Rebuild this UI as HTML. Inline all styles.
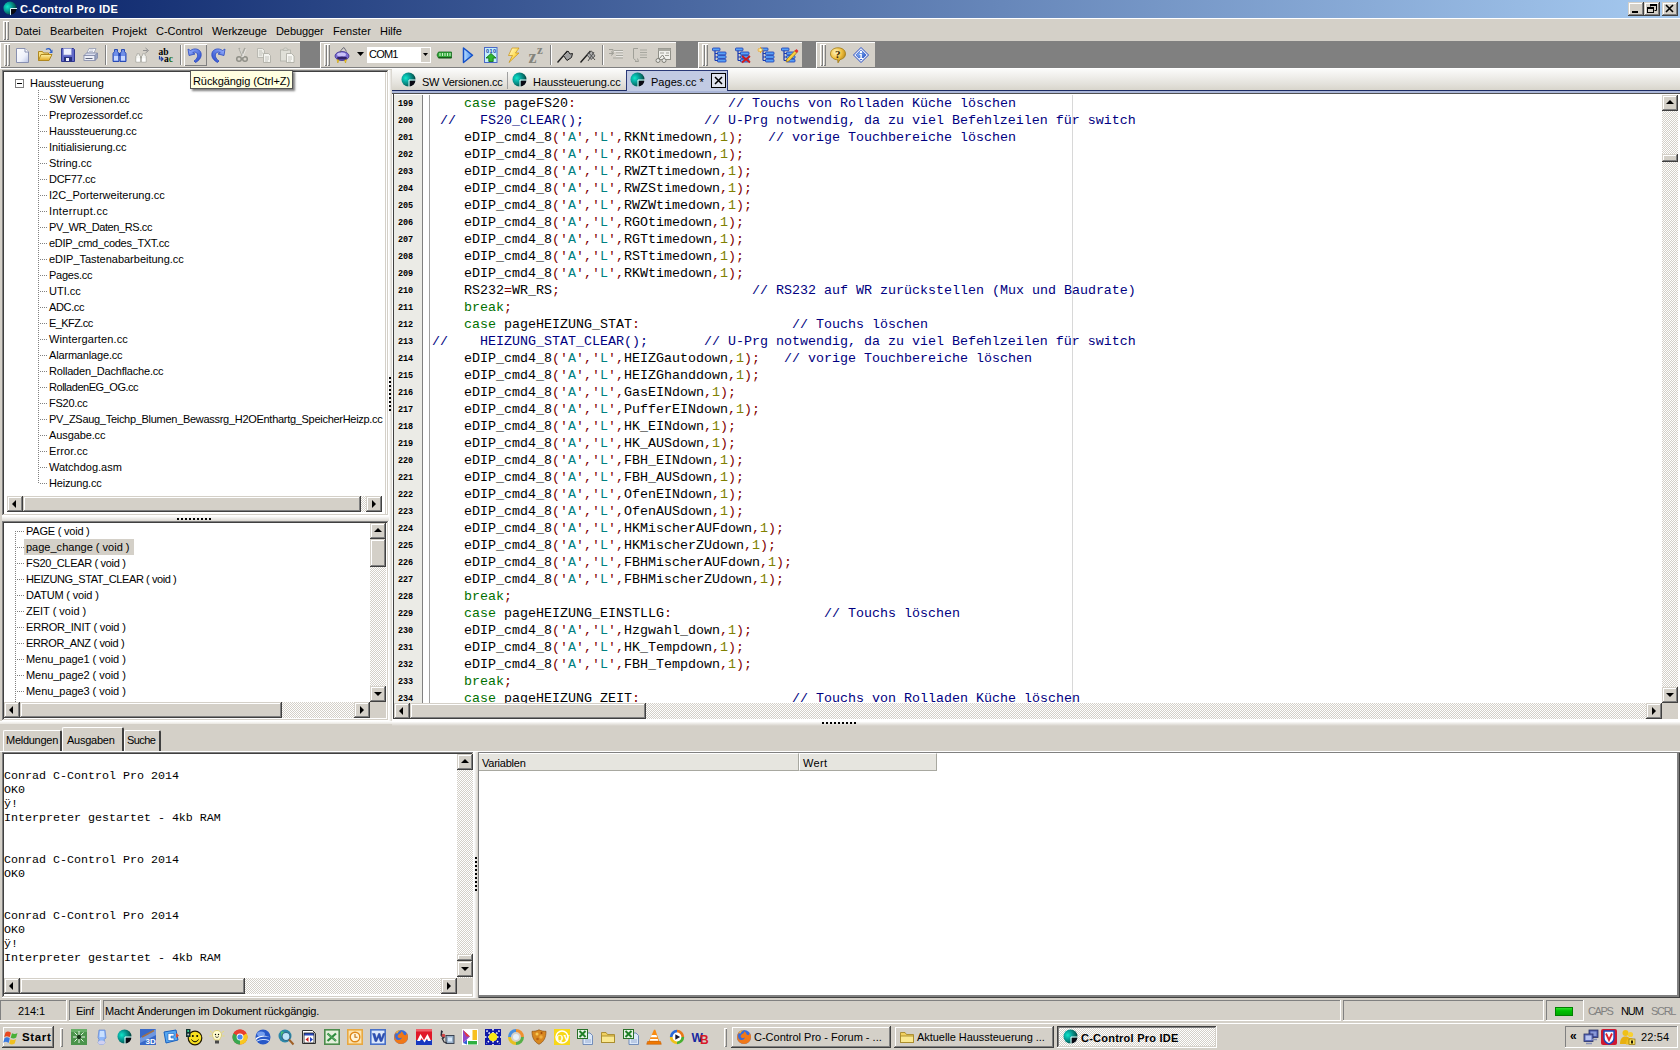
<!DOCTYPE html>
<html lang="de"><head><meta charset="utf-8"><title>C-Control Pro IDE</title>
<style>
*{box-sizing:border-box;margin:0;padding:0}
html,body{width:1680px;height:1050px;overflow:hidden;background:#d4d0c8}
body{position:relative;font-family:"Liberation Sans",sans-serif;font-size:11px;color:#000;line-height:13px}
.a{position:absolute}
.t{position:absolute;white-space:pre;line-height:13px;height:13px}
.raised{background:#d4d0c8;box-shadow:inset -1px -1px #404040,inset 1px 1px #d4d0c8,inset -2px -2px #808080,inset 2px 2px #fff}
.sunken{box-shadow:inset -1px -1px #fff,inset 1px 1px #808080,inset -2px -2px #d4d0c8,inset 2px 2px #404040}
.sunk1{box-shadow:inset -1px -1px #fff,inset 1px 1px #808080}
.track{background:repeating-conic-gradient(#fff 0% 25%,#d4d0c8 0% 50%) 0 0/2px 2px}
.grip{position:absolute;width:3px;box-shadow:inset 1px 1px #fff,inset -1px -1px #808080}
.tb{position:absolute;top:42px;height:26px;background:#d4d0c8}
.sep{position:absolute;top:45px;width:2px;height:20px;border-left:1px solid #808080;border-right:1px solid #fff}
.ic{position:absolute;width:16px;height:16px;overflow:visible}
.mono{font-family:"Liberation Mono",monospace}
.code{position:absolute;left:432px;white-space:pre;font-family:"Liberation Mono",monospace;font-size:13.333px;line-height:17px;height:17px;color:#000}
.ln{position:absolute;left:398px;white-space:pre;font-family:"Liberation Mono",monospace;font-weight:bold;font-size:8.5px;line-height:17px;height:17px;color:#000;letter-spacing:-0.1px}
.k{color:#007000}.c{color:#000080}.s{color:#008080}.n{color:#808000}.o{color:#800000}
.out{position:absolute;left:4px;white-space:pre;font-family:"Liberation Mono",monospace;font-size:11.667px;line-height:14px;height:14px}
.tree{position:absolute;white-space:pre;line-height:16px;height:16px}
.dotv{position:absolute;width:1px;background:repeating-linear-gradient(to bottom,#808080 0 1px,transparent 1px 2px)}
.doth{position:absolute;height:1px;background:repeating-linear-gradient(to right,#808080 0 1px,transparent 1px 2px)}
</style></head>
<body>
<div class="a" style="left:0px;top:0px;width:1680px;height:18px;background:linear-gradient(to right,#0a246a,#a6caf0)"></div>
<div class="a" style="left:0px;top:18px;width:1680px;height:1px;background:#fff"></div>
<div class="t" style="left:20px;top:3px;color:#fff;font-weight:bold;letter-spacing:0.269px;">C-Control Pro IDE</div>
<div class="a raised" style="left:1628px;top:2px;width:16px;height:14px;"><svg width="16" height="14" viewBox="0 0 16 14" style="position:absolute;left:0;top:0"><rect x="4" y="9" width="6" height="2" fill="#000"/></svg></div>
<div class="a raised" style="left:1644px;top:2px;width:16px;height:14px;"><svg width="16" height="14" viewBox="0 0 16 14" style="position:absolute;left:0;top:0"><path d="M6.500 4.500V2.500H12.500V8.500H10.500" fill="none" stroke="#000" stroke-width="1"/><rect x="6" y="2" width="7" height="2" fill="#000"/><rect x="3.500" y="5.500" width="6" height="5" fill="none" stroke="#000"/><rect x="3" y="5" width="7" height="2" fill="#000"/></svg></div>
<div class="a raised" style="left:1662px;top:2px;width:16px;height:14px;"><svg width="16" height="14" viewBox="0 0 16 14" style="position:absolute;left:0;top:0"><path d="M4 3l7 7M11 3l-7 7" stroke="#000" stroke-width="1.6" fill="none"/></svg></div>
<div class="a" style="left:0px;top:19px;width:1680px;height:22px;background:#d4d0c8"></div>
<div class="grip" style="left:3px;top:21px;height:19px"></div><div class="grip" style="left:6px;top:21px;height:19px"></div>
<div class="t" style="left:15px;top:25px;letter-spacing:0.028px;">Datei</div>
<div class="t" style="left:50px;top:25px;letter-spacing:0.065px;">Bearbeiten</div>
<div class="t" style="left:112px;top:25px;letter-spacing:0.092px;">Projekt</div>
<div class="t" style="left:156px;top:25px;letter-spacing:-0.035px;">C-Control</div>
<div class="t" style="left:212px;top:25px;letter-spacing:-0.08px;">Werkzeuge</div>
<div class="t" style="left:276px;top:25px;letter-spacing:-0.075px;">Debugger</div>
<div class="t" style="left:333px;top:25px;letter-spacing:0.084px;">Fenster</div>
<div class="t" style="left:380px;top:25px;letter-spacing:-0.054px;">Hilfe</div>
<div class="a" style="left:0px;top:41px;width:1680px;height:27px;background:#808080"></div>
<div class="a" style="left:0px;top:42px;width:300px;height:26px;background:#d4d0c8;box-shadow:inset 0 1px #fff,inset 1px 0 #fff,inset 0 -1px #808080"></div>
<div class="grip" style="left:4px;top:44px;height:22px"></div><div class="grip" style="left:7px;top:44px;height:22px"></div>
<div class="a" style="left:320px;top:42px;width:356px;height:26px;background:#d4d0c8;box-shadow:inset 0 1px #fff,inset 1px 0 #fff,inset 0 -1px #808080"></div>
<div class="grip" style="left:324px;top:44px;height:22px"></div><div class="grip" style="left:327px;top:44px;height:22px"></div>
<div class="a" style="left:698px;top:42px;width:104px;height:26px;background:#d4d0c8;box-shadow:inset 0 1px #fff,inset 1px 0 #fff,inset 0 -1px #808080"></div>
<div class="grip" style="left:702px;top:44px;height:22px"></div><div class="grip" style="left:705px;top:44px;height:22px"></div>
<div class="a" style="left:816px;top:42px;width:59px;height:26px;background:#d4d0c8;box-shadow:inset 0 1px #fff,inset 1px 0 #fff,inset 0 -1px #808080"></div>
<div class="grip" style="left:820px;top:44px;height:22px"></div><div class="grip" style="left:823px;top:44px;height:22px"></div>
<svg width="0" height="0" style="position:absolute"><defs>
<radialGradient id="gs" cx="0.3" cy="0.4" r="0.75"><stop offset="0" stop-color="#10e8c8"/><stop offset="0.35" stop-color="#08a8a0"/><stop offset="0.75" stop-color="#056860"/><stop offset="1" stop-color="#012828"/></radialGradient>
<linearGradient id="gdoc" x1="0" y1="0" x2="1" y2="1"><stop offset="0" stop-color="#fff"/><stop offset="0.6" stop-color="#eef1fa"/><stop offset="1" stop-color="#b9c3e6"/></linearGradient>
<linearGradient id="gfold" x1="0" y1="0" x2="0" y2="1"><stop offset="0" stop-color="#fff3a8"/><stop offset="1" stop-color="#e2a820"/></linearGradient>
<linearGradient id="gblue" x1="0" y1="0" x2="1" y2="1"><stop offset="0" stop-color="#9ab4ff"/><stop offset="1" stop-color="#2244c8"/></linearGradient>
<linearGradient id="gplay" x1="0" y1="0" x2="1" y2="0"><stop offset="0" stop-color="#bfe0ff"/><stop offset="1" stop-color="#3d8cf0"/></linearGradient>
<radialGradient id="gq" cx="0.35" cy="0.3" r="0.8"><stop offset="0" stop-color="#fff6c0"/><stop offset="0.5" stop-color="#f0c040"/><stop offset="1" stop-color="#a87810"/></radialGradient>
<linearGradient id="ginf" x1="0" y1="0" x2="1" y2="1"><stop offset="0" stop-color="#a0c8ff"/><stop offset="1" stop-color="#1848c0"/></linearGradient>
<linearGradient id="gbolt" x1="0" y1="0" x2="1" y2="1"><stop offset="0" stop-color="#fffbe0"/><stop offset="0.5" stop-color="#ffe060"/><stop offset="1" stop-color="#e8a000"/></linearGradient>
</defs></svg>
<div class="sep" style="left:105px"></div>
<div class="sep" style="left:180px"></div>
<div class="sep" style="left:550px"></div>
<div class="sep" style="left:602px"></div>
<div class="a" style="left:184px;top:44px;width:23px;height:22px;box-shadow:inset 1px 1px #fff,inset -1px -1px #808080"></div>
<svg class="ic" style="left:14px;top:47px;width:16px;height:16px" viewBox="0 0 16 16"><path d="M2.500 1.500h8.500l3.500 3.500v10.500h-12z" fill="url(#gdoc)" stroke="#8890b0" stroke-width="1"/><path d="M11 1.500v3.500h3.500" fill="#fff" stroke="#8890b0"/></svg>
<svg class="ic" style="left:37px;top:47px;width:16px;height:16px" viewBox="0 0 16 16"><path d="M1.500 13.500v-9h4l1 1.500h5v2" fill="#f8e080" stroke="#b08820"/><path d="M1.500 13.500l2.500-6h11l-3 6z" fill="url(#gfold)" stroke="#b08820"/><path d="M9 2.500c2-1.500 4.500-1 5 1.500" fill="none" stroke="#3060c8" stroke-width="1.400"/><path d="M15.500 2.500v3.500h-3.500z" fill="#3060c8"/></svg>
<svg class="ic" style="left:60px;top:47px;width:16px;height:16px" viewBox="0 0 16 16"><path d="M1.500 1.500h12l1 1v12h-13z" fill="#6068c8" stroke="#303890"/><rect x="3.500" y="1.500" width="8" height="6.500" fill="#eef0ff" stroke="#9098d0" stroke-width=".6"/><rect x="4" y="10" width="8" height="4.500" fill="#28307c"/><rect x="6" y="11" width="3" height="3" fill="#f0f0ff"/></svg>
<svg class="ic" style="left:83px;top:47px;width:16px;height:16px" viewBox="0 0 16 16"><path d="M4 6l2-4.500h7l-2 4.500z" fill="#fff" stroke="#9098b0" stroke-width=".8"/><path d="M1 8.500l2.500-2.500h11l-2.500 2.500z" fill="#d8dcec" stroke="#8088a8" stroke-width=".8"/><rect x="1" y="8.500" width="11" height="5" fill="#eef0f8" stroke="#8088a8" stroke-width=".8"/><path d="M12 8.500l2.500-2.500v5l-2.500 2.500z" fill="#98a4c0" stroke="#8088a8" stroke-width=".8"/><rect x="2.500" y="11" width="7" height="1" fill="#606880"/><path d="M6.500 3h4M6 4.500h4" stroke="#a0a8c0" stroke-width=".7"/></svg>
<svg class="ic" style="left:112px;top:47px;width:16px;height:16px" viewBox="0 0 16 16"><path d="M2.500 2.500h3v2l1.500 2v8h-6v-8l1.500-2z" fill="#6f8fe8" stroke="#1c3fb0" stroke-width=".9"/><path d="M9.500 2.500h3v2l1.500 2v8h-6v-8l1.500-2z" fill="#6f8fe8" stroke="#1c3fb0" stroke-width=".9"/><rect x="6.500" y="6" width="2" height="3" fill="#1c3fb0"/><rect x="2" y="9" width="4" height="4.500" fill="#c8d8ff"/><rect x="9" y="9" width="4" height="4.500" fill="#c8d8ff"/></svg>
<svg class="ic" style="left:135px;top:47px;width:16px;height:16px" viewBox="0 0 16 16"><g transform="translate(0,5) scale(.8,.7)"><path d="M2.500 2.500h3v2l1.500 2v8h-6v-8l1.500-2z" fill="#f4f4f0" stroke="#a0a098" stroke-width=".9"/><path d="M9.500 2.500h3v2l1.500 2v8h-6v-8l1.500-2z" fill="#f4f4f0" stroke="#a0a098" stroke-width=".9"/><rect x="6.500" y="6" width="2" height="3" fill="#a0a098"/><rect x="2" y="9" width="4" height="4.500" fill="#ffffff"/><rect x="9" y="9" width="4" height="4.500" fill="#ffffff"/></g><path d="M8 3.500h4.500M10.500 1l3 2.500l-3 2.500" fill="none" stroke="#909090" stroke-width="1"/></svg>
<svg class="ic" style="left:158px;top:47px;width:16px;height:16px" viewBox="0 0 16 16"><text x="0.500" y="7.500" font-family="Liberation Serif,serif" font-size="9.500" font-weight="bold" fill="#000">ab</text><text x="6" y="15" font-family="Liberation Serif,serif" font-size="9.500" font-weight="bold" fill="#000">a<tspan fill="#207020">c</tspan></text><path d="M1.500 9v3h3M3 10l2 2l-2 2" fill="none" stroke="#2040a0" stroke-width="1.200"/></svg>
<svg class="ic" style="left:187px;top:47px;width:16px;height:16px" viewBox="0 0 16 16"><path d="M1 2l1 6.500l6-1.500l-2.200-1.300c2.500-1.500 5.500 0.300 4.700 3.800c-.5 2-2 3.500-3.500 4.500l1.500 1.500c3.500-2 6.500-5 5.500-9.500c-1-4-6.500-5.500-10.500-2.500z" fill="url(#gblue)" stroke="#2848c0" stroke-width=".8"/></svg>
<svg class="ic" style="left:210px;top:47px;width:16px;height:16px" viewBox="0 0 16 16"><g transform="translate(16,0) scale(-1,1)"><path d="M1 2l1 6.500l6-1.500l-2.200-1.300c2.500-1.500 5.500 0.300 4.700 3.800c-.5 2-2 3.500-3.500 4.500l1.500 1.500c3.500-2 6.500-5 5.500-9.500c-1-4-6.500-5.500-10.500-2.500z" fill="url(#gblue)" stroke="#2848c0" stroke-width=".8"/></g></svg>
<svg class="ic" style="left:234px;top:47px;width:16px;height:16px" viewBox="0 0 16 16"><path d="M5 1l3.500 8M11 1l-3.500 8" stroke="#a8a8a0" stroke-width="1.600" fill="none"/><circle cx="5" cy="12" r="2.300" fill="none" stroke="#909088" stroke-width="1.500"/><circle cx="11" cy="12" r="2.300" fill="none" stroke="#909088" stroke-width="1.500"/><path d="M5 1l3.500 8M11 1l-3.500 8" stroke="#fff" stroke-width=".5" fill="none" transform="translate(1,1)"/></svg>
<svg class="ic" style="left:256px;top:47px;width:16px;height:16px" viewBox="0 0 16 16"><path d="M1.500 1.500h5l2 2v7h-7z" fill="#ecece6" stroke="#b0b0a8" stroke-width=".8"/><path d="M7.500 6.500h5l2 2v7h-7z" fill="#f4f4f0" stroke="#a8a8a0" stroke-width=".8"/><path d="M3 4h3M3 6h4M3 8h3M9 10h4M9 12h4M9 14h3" stroke="#b8b8b0" stroke-width=".8"/></svg>
<svg class="ic" style="left:279px;top:47px;width:16px;height:16px" viewBox="0 0 16 16"><rect x="1.500" y="3" width="10" height="11" fill="#e0e0d8" stroke="#b0b0a8" stroke-width=".8"/><path d="M4 3c0-2.500 5-2.500 5 0z" fill="#f0f0ec" stroke="#a8a8a0" stroke-width=".8"/><path d="M7.500 6.500h5l2.500 2.500v6.500h-7.500z" fill="#f8f8f4" stroke="#a8a8a0" stroke-width=".8"/><path d="M9 10h4M9 12h4M9 14h3" stroke="#b8b8b0" stroke-width=".8"/></svg>
<svg class="ic" style="left:334px;top:47px;width:16px;height:16px" viewBox="0 0 16 16"><ellipse cx="8" cy="9" rx="7" ry="4.500" fill="#7a6cd0" stroke="#3a2c90" stroke-width=".8"/><ellipse cx="7.500" cy="7.500" rx="4.500" ry="2" fill="#c8c0f8"/><path d="M6 5.500c1-3 3-4.500 4-5M10 .5l2.500 4" stroke="#606070" stroke-width=".9" fill="none"/><path d="M3 12.500l.8 3.500l1.200-3zM10.500 13l1 3l1-3.500z" fill="#ffe020" stroke="#c09000" stroke-width=".5"/><ellipse cx="8" cy="11" rx="5" ry="1.500" fill="#30206c"/></svg>
<svg class="ic" style="left:436px;top:47px;width:16px;height:16px" viewBox="0 0 16 16"><path d="M1 8l1.500-3h13v6h-13z" fill="#30a838" stroke="#186820" stroke-width=".8"/><path d="M4 6v3M6.500 6v3M9 6v3M11.500 6v3M14 6v3" stroke="#c8f0c8" stroke-width="1.100"/><rect x="2.500" y="10" width="13" height="1.200" fill="#185818"/></svg>
<svg class="ic" style="left:460px;top:47px;width:16px;height:16px" viewBox="0 0 16 16"><path d="M3.500 1v14.500l9-7.250z" fill="url(#gplay)" stroke="#1450c8" stroke-width="1.500" stroke-linejoin="round"/></svg>
<svg class="ic" style="left:483px;top:47px;width:16px;height:16px" viewBox="0 0 16 16"><rect x="1.500" y=".5" width="12.500" height="15" fill="#c4f0fc" stroke="#4a68c8" stroke-width="1"/><text x="3" y="5.800" font-family="Liberation Sans,sans-serif" font-size="5.500" font-weight="bold" fill="#1838a0" textLength="10">010</text><path d="M8 6.500l5 4.500h-2.800v3.500h-4.400v-3.500h-2.800z" fill="#30b830" stroke="#106810" stroke-width=".8"/></svg>
<svg class="ic" style="left:506px;top:47px;width:16px;height:16px" viewBox="0 0 16 16"><path d="M6 1h7l-3.500 5h3.500l-10 9.500l3.500-7h-4z" fill="url(#gbolt)" stroke="#c89010" stroke-width=".7"/></svg>
<svg class="ic" style="left:529px;top:47px;width:16px;height:16px" viewBox="0 0 16 16"><text x="-.5" y="15.500" font-family="Liberation Serif,serif" font-size="18" font-weight="bold" fill="#84847c">z</text><text x="8" y="6.500" font-family="Liberation Serif,serif" font-size="13" font-weight="bold" fill="#84847c">z</text></svg>
<svg class="ic" style="left:557px;top:47px;width:16px;height:16px" viewBox="0 0 16 16"><path d="M.5 15.500l10-11.500" stroke="#202020" stroke-width="1.400"/><path d="M6.500 8.500l4.500-4.500l2 3l2.500-.5l-1 4l-4.500 3z" fill="#a0a0a0" stroke="#202020" stroke-width="1"/></svg>
<svg class="ic" style="left:580px;top:47px;width:16px;height:16px" viewBox="0 0 16 16"><path d="M.5 15.500l10-11.500" stroke="#202020" stroke-width="1.400"/><path d="M7 8l4.500-4l3.500 5l-4 3.500z" fill="#b0b0b0" stroke="#404040" stroke-width=".8"/><path d="M8 5l7 8M14 5l-6 9" stroke="#505050" stroke-width="1"/></svg>
<svg class="ic" style="left:608px;top:47px;width:16px;height:16px" viewBox="0 0 16 16"><path d="M6 3.500h9M8 6h7M8 8.500h7M5 11h10" stroke="#a8a8a0" stroke-width="1"/><path d="M1 2.500h4v4M3 4.500l2.500 2l-2.500 2M1 6.500h4" fill="none" stroke="#a0a098" stroke-width="1"/><path d="M6 4.500h9M8 7h7M8 9.500h7" stroke="#fff" stroke-width=".5"/></svg>
<svg class="ic" style="left:632px;top:47px;width:16px;height:16px" viewBox="0 0 16 16"><path d="M8 3h7M8 5.500h7M8 8h7M8 10.500h7" stroke="#a8a8a0" stroke-width="1"/><path d="M6 1.500h-4.500v10l3 2.500M5.500 11.500l1 3l-3.500 0" fill="none" stroke="#a0a098" stroke-width="1"/></svg>
<svg class="ic" style="left:655px;top:47px;width:16px;height:16px" viewBox="0 0 16 16"><rect x="3.500" y="1.500" width="12" height="11" fill="#f0f0ec" stroke="#909088" stroke-width="1"/><rect x="3.500" y="1.500" width="12" height="2.500" fill="#a8a8a0"/><path d="M5 6h4M11 6h3M10 8.500h4" stroke="#a0a098"/><path d="M4 12l3.500-4l2 3" fill="none" stroke="#808078"/><circle cx="3" cy="13.500" r="2" fill="#e8e8e4" stroke="#808078"/><circle cx="9" cy="13.500" r="2" fill="#e8e8e4" stroke="#808078"/></svg>
<svg class="ic" style="left:712px;top:47px;width:16px;height:16px" viewBox="0 0 16 16"><path d="M3 3v10.500M3 6.500h3M3 10h3M3 13.500h3" stroke="#1838b0" stroke-width="1.200" fill="none"/><rect x=".5" y="1" width="7.500" height="2.800" rx=".8" fill="#58a0f8" stroke="#1838b0" stroke-width=".8"/><rect x="5.500" y="5" width="8.500" height="2.800" rx=".8" fill="#58a0f8" stroke="#1838b0" stroke-width=".8"/><rect x="5.500" y="8.600" width="8.500" height="2.800" rx=".8" fill="#58a0f8" stroke="#1838b0" stroke-width=".8"/><rect x="5.500" y="12.200" width="8.500" height="2.800" rx=".8" fill="#58a0f8" stroke="#1838b0" stroke-width=".8"/></svg>
<svg class="ic" style="left:735px;top:47px;width:16px;height:16px" viewBox="0 0 16 16"><path d="M3 3v10.500M3 6.500h3M3 10h3M3 13.500h3" stroke="#1838b0" stroke-width="1.200" fill="none"/><rect x=".5" y="1" width="7.500" height="2.800" rx=".8" fill="#58a0f8" stroke="#1838b0" stroke-width=".8"/><rect x="5.500" y="5" width="8.500" height="2.800" rx=".8" fill="#58a0f8" stroke="#1838b0" stroke-width=".8"/><rect x="5.500" y="8.600" width="8.500" height="2.800" rx=".8" fill="#58a0f8" stroke="#1838b0" stroke-width=".8"/><rect x="5.500" y="12.200" width="8.500" height="2.800" rx=".8" fill="#58a0f8" stroke="#1838b0" stroke-width=".8"/><path d="M7 9l8 6.500M15 9l-8 6.500" stroke="#d01818" stroke-width="1.800"/></svg>
<svg class="ic" style="left:758px;top:47px;width:16px;height:16px" viewBox="0 0 16 16"><g transform="translate(2,0)"><path d="M3 3v10.500M3 6.500h3M3 10h3M3 13.500h3" stroke="#1838b0" stroke-width="1.200" fill="none"/><rect x=".5" y="1" width="7.500" height="2.800" rx=".8" fill="#58a0f8" stroke="#1838b0" stroke-width=".8"/><rect x="5.500" y="5" width="8.500" height="2.800" rx=".8" fill="#58a0f8" stroke="#1838b0" stroke-width=".8"/><rect x="5.500" y="8.600" width="8.500" height="2.800" rx=".8" fill="#58a0f8" stroke="#1838b0" stroke-width=".8"/><rect x="5.500" y="12.200" width="8.500" height="2.800" rx=".8" fill="#58a0f8" stroke="#1838b0" stroke-width=".8"/></g><path d="M2.500 0v6M-.5 3h6M.5 1l4 4M4.500 1l-4 4" stroke="#f8a818" stroke-width="1"/><circle cx="2.500" cy="3" r="1.300" fill="#fff8a0"/></svg>
<svg class="ic" style="left:781px;top:47px;width:16px;height:16px" viewBox="0 0 16 16"><path d="M3 3v10.500M3 6.500h3M3 10h3M3 13.500h3" stroke="#1838b0" stroke-width="1.200" fill="none"/><rect x=".5" y="1" width="7.500" height="2.800" rx=".8" fill="#58a0f8" stroke="#1838b0" stroke-width=".8"/><rect x="5.500" y="5" width="8.500" height="2.800" rx=".8" fill="#58a0f8" stroke="#1838b0" stroke-width=".8"/><rect x="5.500" y="8.600" width="8.500" height="2.800" rx=".8" fill="#58a0f8" stroke="#1838b0" stroke-width=".8"/><rect x="5.500" y="12.200" width="8.500" height="2.800" rx=".8" fill="#58a0f8" stroke="#1838b0" stroke-width=".8"/><path d="M6 12l8.500-9l2 2l-8.500 9l-3 1z" fill="#f8d040" stroke="#a07810" stroke-width=".7"/><path d="M13.500 4l2-2l2 2l-2 2z" fill="#e03030"/></svg>
<svg class="ic" style="left:830px;top:47px;width:16px;height:16px" viewBox="0 0 16 16"><path d="M8 .8c4.500 0 7.500 2.600 7.500 6s-2.500 5.200-5.500 5.800l-2 3.200l-.3-3c-4-.2-7.200-2.600-7.200-6s3-6 7.500-6z" fill="url(#gq)" stroke="#a07810" stroke-width=".8"/><text x="5" y="10.500" font-family="Liberation Serif,serif" font-size="11" font-weight="bold" fill="#302000">?</text></svg>
<svg class="ic" style="left:853px;top:47px;width:16px;height:16px" viewBox="0 0 16 16"><path d="M8 .5l7.500 7.500l-7.500 7.500l-7.500-7.500z" fill="#fff" stroke="#1c44c0" stroke-width="1"/><path d="M8 2.800l5.200 5.200l-5.200 5.200l-5.200-5.200z" fill="url(#ginf)" stroke="#1c44c0" stroke-width=".6"/><circle cx="8" cy="5" r="1.200" fill="#fff"/><path d="M6.500 7h2.300v4h1.200v1h-3.800v-1h1.200v-3h-.9z" fill="#fff"/></svg>
<svg class="ic" style="left:357px;top:52px;width:7px;height:4px" viewBox="0 0 7 4"><path d="M0 0h7l-3.500 4z" fill="#000"/></svg>
<div class="a" style="left:367px;top:47px;width:64px;height:16px;background:#fff"></div>
<div class="t" style="left:369px;top:48px;letter-spacing:-0.8px">COM1</div>
<div class="a" style="left:421px;top:48px;width:9px;height:14px;background:#d4d0c8"></div>
<svg class="ic" style="left:423px;top:53px;width:5px;height:3px" viewBox="0 0 5 3"><path d="M0 0h5l-2.500 3z" fill="#000"/></svg>
<div class="a" style="left:0px;top:68px;width:1680px;height:1px;background:#fff"></div>
<div class="a sunken" style="left:2px;top:70px;width:387px;height:446px;background:#fff"></div>
<div class="a" style="left:385px;top:72px;width:1px;height:442px;background:#d4d0c8"></div>
<div class="a" style="left:15px;top:79px;width:9px;height:9px;border:1px solid #808080;background:#fff"><div class="a" style="left:1px;top:3px;width:5px;height:1px;background:#000"></div></div>
<div class="tree" style="left:30px;top:75px;letter-spacing:-0.067px;">Haussteuerung</div>
<div class="dotv" style="left:38px;top:90px;height:394px"></div>
<div class="doth" style="left:40px;top:99px;width:8px"></div><div class="tree" style="left:49px;top:91px;letter-spacing:-0.212px;">SW Versionen.cc</div>
<div class="doth" style="left:40px;top:115px;width:8px"></div><div class="tree" style="left:49px;top:107px;letter-spacing:-0.057px;">Preprozessordef.cc</div>
<div class="doth" style="left:40px;top:131px;width:8px"></div><div class="tree" style="left:49px;top:123px;letter-spacing:-0.058px;">Haussteuerung.cc</div>
<div class="doth" style="left:40px;top:147px;width:8px"></div><div class="tree" style="left:49px;top:139px;letter-spacing:-0.045px;">Initialisierung.cc</div>
<div class="doth" style="left:40px;top:163px;width:8px"></div><div class="tree" style="left:49px;top:155px;">String.cc</div>
<div class="doth" style="left:40px;top:179px;width:8px"></div><div class="tree" style="left:49px;top:171px;letter-spacing:-0.301px;">DCF77.cc</div>
<div class="doth" style="left:40px;top:195px;width:8px"></div><div class="tree" style="left:49px;top:187px;letter-spacing:0.04px;">I2C_Porterweiterung.cc</div>
<div class="doth" style="left:40px;top:211px;width:8px"></div><div class="tree" style="left:49px;top:203px;letter-spacing:0.343px;">Interrupt.cc</div>
<div class="doth" style="left:40px;top:227px;width:8px"></div><div class="tree" style="left:49px;top:219px;letter-spacing:-0.415px;">PV_WR_Daten_RS.cc</div>
<div class="doth" style="left:40px;top:243px;width:8px"></div><div class="tree" style="left:49px;top:235px;letter-spacing:-0.303px;">eDIP_cmd_codes_TXT.cc</div>
<div class="doth" style="left:40px;top:259px;width:8px"></div><div class="tree" style="left:49px;top:251px;letter-spacing:-0.015px;">eDIP_Tastenabarbeitung.cc</div>
<div class="doth" style="left:40px;top:275px;width:8px"></div><div class="tree" style="left:49px;top:267px;letter-spacing:-0.236px;">Pages.cc</div>
<div class="doth" style="left:40px;top:291px;width:8px"></div><div class="tree" style="left:49px;top:283px;">UTI.cc</div>
<div class="doth" style="left:40px;top:307px;width:8px"></div><div class="tree" style="left:49px;top:299px;letter-spacing:-0.356px;">ADC.cc</div>
<div class="doth" style="left:40px;top:323px;width:8px"></div><div class="tree" style="left:49px;top:315px;letter-spacing:-0.571px;">E_KFZ.cc</div>
<div class="doth" style="left:40px;top:339px;width:8px"></div><div class="tree" style="left:49px;top:331px;letter-spacing:0.126px;">Wintergarten.cc</div>
<div class="doth" style="left:40px;top:355px;width:8px"></div><div class="tree" style="left:49px;top:347px;letter-spacing:-0.171px;">Alarmanlage.cc</div>
<div class="doth" style="left:40px;top:371px;width:8px"></div><div class="tree" style="left:49px;top:363px;letter-spacing:-0.192px;">Rolladen_Dachflache.cc</div>
<div class="doth" style="left:40px;top:387px;width:8px"></div><div class="tree" style="left:49px;top:379px;letter-spacing:-0.467px;">RolladenEG_OG.cc</div>
<div class="doth" style="left:40px;top:403px;width:8px"></div><div class="tree" style="left:49px;top:395px;letter-spacing:-0.26px;">FS20.cc</div>
<div class="doth" style="left:40px;top:419px;width:8px"></div><div class="tree" style="left:49px;top:411px;letter-spacing:-0.291px;">PV_ZSaug_Teichp_Blumen_Bewassrg_H2OEnthartg_SpeicherHeizp.cc</div>
<div class="doth" style="left:40px;top:435px;width:8px"></div><div class="tree" style="left:49px;top:427px;letter-spacing:-0.109px;">Ausgabe.cc</div>
<div class="doth" style="left:40px;top:451px;width:8px"></div><div class="tree" style="left:49px;top:443px;letter-spacing:0.128px;">Error.cc</div>
<div class="doth" style="left:40px;top:467px;width:8px"></div><div class="tree" style="left:49px;top:459px;letter-spacing:-0.015px;">Watchdog.asm</div>
<div class="doth" style="left:40px;top:483px;width:8px"></div><div class="tree" style="left:49px;top:475px;letter-spacing:-0.18px;">Heizung.cc</div>
<div class="a track" style="left:7px;top:496px;width:375px;height:16px;"></div>
<div class="a raised" style="left:7px;top:496px;width:16px;height:16px;"><svg width="16" height="16" viewBox="0 0 16 16" style="position:absolute;left:0;top:0"><polygon points="9,4 9,12 5,8" fill="#000"/></svg></div>
<div class="a raised" style="left:366px;top:496px;width:16px;height:16px;"><svg width="16" height="16" viewBox="0 0 16 16" style="position:absolute;left:0;top:0"><polygon points="6,4 6,12 10,8" fill="#000"/></svg></div>
<div class="a raised" style="left:23px;top:496px;width:338px;height:16px;"></div>
<div class="a" style="left:2px;top:516px;width:387px;height:6px;background:linear-gradient(#fff,#d4d0c8)"></div>
<div class="a" style="left:177px;top:518px;width:34px;height:2px;background:repeating-linear-gradient(to right,#000 0 2px,transparent 2px 4px)"></div>
<div class="a sunken" style="left:2px;top:521px;width:387px;height:200px;background:#fff"></div>
<div class="dotv" style="left:15px;top:531px;height:171px"></div>
<div class="a" style="left:24px;top:539px;width:110px;height:16px;background:#d4d0c8"></div>
<div class="doth" style="left:15px;top:531px;width:9px"></div><div class="tree" style="left:26px;top:523px;letter-spacing:-0.22px;">PAGE ( void )</div>
<div class="doth" style="left:15px;top:547px;width:9px"></div><div class="tree" style="left:26px;top:539px;letter-spacing:0.007px;">page_change ( void )</div>
<div class="doth" style="left:15px;top:563px;width:9px"></div><div class="tree" style="left:26px;top:555px;letter-spacing:-0.331px;">FS20_CLEAR ( void )</div>
<div class="doth" style="left:15px;top:579px;width:9px"></div><div class="tree" style="left:26px;top:571px;letter-spacing:-0.415px;">HEIZUNG_STAT_CLEAR ( void )</div>
<div class="doth" style="left:15px;top:595px;width:9px"></div><div class="tree" style="left:26px;top:587px;letter-spacing:-0.167px;">DATUM ( void )</div>
<div class="doth" style="left:15px;top:611px;width:9px"></div><div class="tree" style="left:26px;top:603px;letter-spacing:-0.009px;">ZEIT ( void )</div>
<div class="doth" style="left:15px;top:627px;width:9px"></div><div class="tree" style="left:26px;top:619px;letter-spacing:-0.183px;">ERROR_INIT ( void )</div>
<div class="doth" style="left:15px;top:643px;width:9px"></div><div class="tree" style="left:26px;top:635px;letter-spacing:-0.349px;">ERROR_ANZ ( void )</div>
<div class="doth" style="left:15px;top:659px;width:9px"></div><div class="tree" style="left:26px;top:651px;letter-spacing:-0.061px;">Menu_page1 ( void )</div>
<div class="doth" style="left:15px;top:675px;width:9px"></div><div class="tree" style="left:26px;top:667px;letter-spacing:-0.061px;">Menu_page2 ( void )</div>
<div class="doth" style="left:15px;top:691px;width:9px"></div><div class="tree" style="left:26px;top:683px;letter-spacing:-0.061px;">Menu_page3 ( void )</div>
<div class="a track" style="left:370px;top:523px;width:16px;height:179px;"></div>
<div class="a raised" style="left:370px;top:523px;width:16px;height:16px;"><svg width="16" height="16" viewBox="0 0 16 16" style="position:absolute;left:0;top:0"><polygon points="4,9 8,5 12,9" fill="#000"/></svg></div>
<div class="a raised" style="left:370px;top:686px;width:16px;height:16px;"><svg width="16" height="16" viewBox="0 0 16 16" style="position:absolute;left:0;top:0"><polygon points="4,6 12,6 8,10" fill="#000"/></svg></div>
<div class="a raised" style="left:370px;top:539px;width:16px;height:28px;"></div>
<div class="a track" style="left:4px;top:702px;width:366px;height:16px;"></div>
<div class="a raised" style="left:4px;top:702px;width:16px;height:16px;"><svg width="16" height="16" viewBox="0 0 16 16" style="position:absolute;left:0;top:0"><polygon points="9,4 9,12 5,8" fill="#000"/></svg></div>
<div class="a raised" style="left:354px;top:702px;width:16px;height:16px;"><svg width="16" height="16" viewBox="0 0 16 16" style="position:absolute;left:0;top:0"><polygon points="6,4 6,12 10,8" fill="#000"/></svg></div>
<div class="a raised" style="left:20px;top:702px;width:262px;height:16px;"></div>
<div class="a" style="left:370px;top:702px;width:16px;height:16px;background:#d4d0c8"></div>
<div class="a" style="left:389px;top:70px;width:3px;height:651px;background:linear-gradient(to right,#fff,#d4d0c8)"></div>
<div class="a" style="left:389px;top:377px;width:2px;height:34px;background:repeating-linear-gradient(to bottom,#000 0 2px,transparent 2px 4px)"></div>
<div class="a" style="left:392px;top:69px;width:1288px;height:21px;background:linear-gradient(#fbfbfa,#e4e2dc 70%,#d8d5cc)"></div>
<div class="a" style="left:392px;top:90px;width:1288px;height:1px;background:#1c2b63"></div>
<div class="a" style="left:392px;top:91px;width:1288px;height:2px;background:#aab6d8"></div>
<div class="a" style="left:392px;top:93px;width:1288px;height:1px;background:#505050"></div>
<div class="a" style="left:626px;top:70px;width:102px;height:21px;background:#c2cbe3;border:1px solid #2b3a78;border-bottom:none"></div>
<svg class="ic" style="left:401px;top:72px;width:16px;height:16px" viewBox="0 0 16 16"><circle cx="7.500" cy="7.500" r="7" fill="url(#gs)"/><path d="M8.500 8.500H14.400A7 7 0 0 1 8.500 14.400Z" fill="#0a0a14"/><path d="M8 15V8H15" fill="none" stroke="#eaffff" stroke-width="1"/></svg>
<svg class="ic" style="left:512px;top:72px;width:16px;height:16px" viewBox="0 0 16 16"><circle cx="7.500" cy="7.500" r="7" fill="url(#gs)"/><path d="M8.500 8.500H14.400A7 7 0 0 1 8.500 14.400Z" fill="#0a0a14"/><path d="M8 15V8H15" fill="none" stroke="#eaffff" stroke-width="1"/></svg>
<svg class="ic" style="left:630px;top:72px;width:16px;height:16px" viewBox="0 0 16 16"><circle cx="7.500" cy="7.500" r="7" fill="url(#gs)"/><path d="M8.500 8.500H14.400A7 7 0 0 1 8.500 14.400Z" fill="#0a0a14"/><path d="M8 15V8H15" fill="none" stroke="#eaffff" stroke-width="1"/></svg>
<svg class="ic" style="left:3px;top:1px;width:15px;height:15px" viewBox="0 0 16 16"><circle cx="7.500" cy="7.500" r="7" fill="url(#gs)"/><path d="M8.500 8.500H14.400A7 7 0 0 1 8.500 14.400Z" fill="#0a0a14"/><path d="M8 15V8H15" fill="none" stroke="#eaffff" stroke-width="1"/></svg>
<div class="t" style="left:422px;top:76px;letter-spacing:-0.212px;">SW Versionen.cc</div>
<div class="a" style="left:507px;top:72px;width:1px;height:17px;background:#a0a0a0"></div>
<div class="t" style="left:533px;top:76px;letter-spacing:-0.058px;">Haussteuerung.cc</div>
<div class="t" style="left:651px;top:76px;letter-spacing:0.023px;">Pages.cc *</div>
<div class="a" style="left:711px;top:73px;width:15px;height:15px;border:1px solid #000;background:#dfe3ee"><svg width="13" height="13" viewBox="0 0 13 13" style="position:absolute;left:0;top:0"><path d="M3 3l7 7M10 3l-7 7" stroke="#000" stroke-width="1.5"/></svg></div>
<div class="a" style="left:392px;top:94px;width:1288px;height:627px;background:#fff"></div>
<div class="a" style="left:393px;top:94px;width:1px;height:626px;background:#404040"></div>
<div class="a" style="left:394px;top:95px;width:28px;height:608px;background:#ebebe6"></div>
<div class="a" style="left:422px;top:95px;width:1px;height:608px;background:#808080"></div>
<div class="a" style="left:429px;top:95px;width:1px;height:608px;background:#a0a0a0"></div>
<div class="a" style="left:1072px;top:95px;width:1px;height:608px;background:#d8d8d8"></div>
<div class="a" style="left:392px;top:95px;width:1270px;height:608px;overflow:hidden">
<div class="ln" style="left:6px;top:1px">199</div><div class="code" style="left:40px;top:0px">    <span class=k>case</span> pageFS20<span class=o>:</span>                   <span class=c>// Touchs von Rolladen Küche löschen</span></div>
<div class="ln" style="left:6px;top:18px">200</div><div class="code" style="left:40px;top:17px"> <span class=c>//   FS20_CLEAR();               // U-Prg notwendig, da zu viel Befehlzeilen für switch</span></div>
<div class="ln" style="left:6px;top:35px">201</div><div class="code" style="left:40px;top:34px">    eDIP_cmd4_8<span class=o>('</span><span class=s>A</span><span class=o>','</span><span class=s>L</span><span class=o>',</span>RKNtimedown<span class=o>,</span><span class=n>1</span><span class=o>);</span>   <span class=c>// vorige Touchbereiche löschen</span></div>
<div class="ln" style="left:6px;top:52px">202</div><div class="code" style="left:40px;top:51px">    eDIP_cmd4_8<span class=o>('</span><span class=s>A</span><span class=o>','</span><span class=s>L</span><span class=o>',</span>RKOtimedown<span class=o>,</span><span class=n>1</span><span class=o>);</span></div>
<div class="ln" style="left:6px;top:69px">203</div><div class="code" style="left:40px;top:68px">    eDIP_cmd4_8<span class=o>('</span><span class=s>A</span><span class=o>','</span><span class=s>L</span><span class=o>',</span>RWZTtimedown<span class=o>,</span><span class=n>1</span><span class=o>);</span></div>
<div class="ln" style="left:6px;top:86px">204</div><div class="code" style="left:40px;top:85px">    eDIP_cmd4_8<span class=o>('</span><span class=s>A</span><span class=o>','</span><span class=s>L</span><span class=o>',</span>RWZStimedown<span class=o>,</span><span class=n>1</span><span class=o>);</span></div>
<div class="ln" style="left:6px;top:103px">205</div><div class="code" style="left:40px;top:102px">    eDIP_cmd4_8<span class=o>('</span><span class=s>A</span><span class=o>','</span><span class=s>L</span><span class=o>',</span>RWZWtimedown<span class=o>,</span><span class=n>1</span><span class=o>);</span></div>
<div class="ln" style="left:6px;top:120px">206</div><div class="code" style="left:40px;top:119px">    eDIP_cmd4_8<span class=o>('</span><span class=s>A</span><span class=o>','</span><span class=s>L</span><span class=o>',</span>RGOtimedown<span class=o>,</span><span class=n>1</span><span class=o>);</span></div>
<div class="ln" style="left:6px;top:137px">207</div><div class="code" style="left:40px;top:136px">    eDIP_cmd4_8<span class=o>('</span><span class=s>A</span><span class=o>','</span><span class=s>L</span><span class=o>',</span>RGTtimedown<span class=o>,</span><span class=n>1</span><span class=o>);</span></div>
<div class="ln" style="left:6px;top:154px">208</div><div class="code" style="left:40px;top:153px">    eDIP_cmd4_8<span class=o>('</span><span class=s>A</span><span class=o>','</span><span class=s>L</span><span class=o>',</span>RSTtimedown<span class=o>,</span><span class=n>1</span><span class=o>);</span></div>
<div class="ln" style="left:6px;top:171px">209</div><div class="code" style="left:40px;top:170px">    eDIP_cmd4_8<span class=o>('</span><span class=s>A</span><span class=o>','</span><span class=s>L</span><span class=o>',</span>RKWtimedown<span class=o>,</span><span class=n>1</span><span class=o>);</span></div>
<div class="ln" style="left:6px;top:188px">210</div><div class="code" style="left:40px;top:187px">    RS232<span class=o>=</span>WR_RS<span class=o>;</span>                        <span class=c>// RS232 auf WR zurückstellen (Mux und Baudrate)</span></div>
<div class="ln" style="left:6px;top:205px">211</div><div class="code" style="left:40px;top:204px">    <span class=k>break</span><span class=o>;</span></div>
<div class="ln" style="left:6px;top:222px">212</div><div class="code" style="left:40px;top:221px">    <span class=k>case</span> pageHEIZUNG_STAT<span class=o>:</span>                   <span class=c>// Touchs löschen</span></div>
<div class="ln" style="left:6px;top:239px">213</div><div class="code" style="left:40px;top:238px"><span class=c>//    HEIZUNG_STAT_CLEAR();       // U-Prg notwendig, da zu viel Befehlzeilen für switch</span></div>
<div class="ln" style="left:6px;top:256px">214</div><div class="code" style="left:40px;top:255px">    eDIP_cmd4_8<span class=o>('</span><span class=s>A</span><span class=o>','</span><span class=s>L</span><span class=o>',</span>HEIZGautodown<span class=o>,</span><span class=n>1</span><span class=o>);</span>   <span class=c>// vorige Touchbereiche löschen</span></div>
<div class="ln" style="left:6px;top:273px">215</div><div class="code" style="left:40px;top:272px">    eDIP_cmd4_8<span class=o>('</span><span class=s>A</span><span class=o>','</span><span class=s>L</span><span class=o>',</span>HEIZGhanddown<span class=o>,</span><span class=n>1</span><span class=o>);</span></div>
<div class="ln" style="left:6px;top:290px">216</div><div class="code" style="left:40px;top:289px">    eDIP_cmd4_8<span class=o>('</span><span class=s>A</span><span class=o>','</span><span class=s>L</span><span class=o>',</span>GasEINdown<span class=o>,</span><span class=n>1</span><span class=o>);</span></div>
<div class="ln" style="left:6px;top:307px">217</div><div class="code" style="left:40px;top:306px">    eDIP_cmd4_8<span class=o>('</span><span class=s>A</span><span class=o>','</span><span class=s>L</span><span class=o>',</span>PufferEINdown<span class=o>,</span><span class=n>1</span><span class=o>);</span></div>
<div class="ln" style="left:6px;top:324px">218</div><div class="code" style="left:40px;top:323px">    eDIP_cmd4_8<span class=o>('</span><span class=s>A</span><span class=o>','</span><span class=s>L</span><span class=o>',</span>HK_EINdown<span class=o>,</span><span class=n>1</span><span class=o>);</span></div>
<div class="ln" style="left:6px;top:341px">219</div><div class="code" style="left:40px;top:340px">    eDIP_cmd4_8<span class=o>('</span><span class=s>A</span><span class=o>','</span><span class=s>L</span><span class=o>',</span>HK_AUSdown<span class=o>,</span><span class=n>1</span><span class=o>);</span></div>
<div class="ln" style="left:6px;top:358px">220</div><div class="code" style="left:40px;top:357px">    eDIP_cmd4_8<span class=o>('</span><span class=s>A</span><span class=o>','</span><span class=s>L</span><span class=o>',</span>FBH_EINdown<span class=o>,</span><span class=n>1</span><span class=o>);</span></div>
<div class="ln" style="left:6px;top:375px">221</div><div class="code" style="left:40px;top:374px">    eDIP_cmd4_8<span class=o>('</span><span class=s>A</span><span class=o>','</span><span class=s>L</span><span class=o>',</span>FBH_AUSdown<span class=o>,</span><span class=n>1</span><span class=o>);</span></div>
<div class="ln" style="left:6px;top:392px">222</div><div class="code" style="left:40px;top:391px">    eDIP_cmd4_8<span class=o>('</span><span class=s>A</span><span class=o>','</span><span class=s>L</span><span class=o>',</span>OfenEINdown<span class=o>,</span><span class=n>1</span><span class=o>);</span></div>
<div class="ln" style="left:6px;top:409px">223</div><div class="code" style="left:40px;top:408px">    eDIP_cmd4_8<span class=o>('</span><span class=s>A</span><span class=o>','</span><span class=s>L</span><span class=o>',</span>OfenAUSdown<span class=o>,</span><span class=n>1</span><span class=o>);</span></div>
<div class="ln" style="left:6px;top:426px">224</div><div class="code" style="left:40px;top:425px">    eDIP_cmd4_8<span class=o>('</span><span class=s>A</span><span class=o>','</span><span class=s>L</span><span class=o>',</span>HKMischerAUFdown<span class=o>,</span><span class=n>1</span><span class=o>);</span></div>
<div class="ln" style="left:6px;top:443px">225</div><div class="code" style="left:40px;top:442px">    eDIP_cmd4_8<span class=o>('</span><span class=s>A</span><span class=o>','</span><span class=s>L</span><span class=o>',</span>HKMischerZUdown<span class=o>,</span><span class=n>1</span><span class=o>);</span></div>
<div class="ln" style="left:6px;top:460px">226</div><div class="code" style="left:40px;top:459px">    eDIP_cmd4_8<span class=o>('</span><span class=s>A</span><span class=o>','</span><span class=s>L</span><span class=o>',</span>FBHMischerAUFdown<span class=o>,</span><span class=n>1</span><span class=o>);</span></div>
<div class="ln" style="left:6px;top:477px">227</div><div class="code" style="left:40px;top:476px">    eDIP_cmd4_8<span class=o>('</span><span class=s>A</span><span class=o>','</span><span class=s>L</span><span class=o>',</span>FBHMischerZUdown<span class=o>,</span><span class=n>1</span><span class=o>);</span></div>
<div class="ln" style="left:6px;top:494px">228</div><div class="code" style="left:40px;top:493px">    <span class=k>break</span><span class=o>;</span></div>
<div class="ln" style="left:6px;top:511px">229</div><div class="code" style="left:40px;top:510px">    <span class=k>case</span> pageHEIZUNG_EINSTLLG<span class=o>:</span>                   <span class=c>// Touchs löschen</span></div>
<div class="ln" style="left:6px;top:528px">230</div><div class="code" style="left:40px;top:527px">    eDIP_cmd4_8<span class=o>('</span><span class=s>A</span><span class=o>','</span><span class=s>L</span><span class=o>',</span>Hzgwahl_down<span class=o>,</span><span class=n>1</span><span class=o>);</span></div>
<div class="ln" style="left:6px;top:545px">231</div><div class="code" style="left:40px;top:544px">    eDIP_cmd4_8<span class=o>('</span><span class=s>A</span><span class=o>','</span><span class=s>L</span><span class=o>',</span>HK_Tempdown<span class=o>,</span><span class=n>1</span><span class=o>);</span></div>
<div class="ln" style="left:6px;top:562px">232</div><div class="code" style="left:40px;top:561px">    eDIP_cmd4_8<span class=o>('</span><span class=s>A</span><span class=o>','</span><span class=s>L</span><span class=o>',</span>FBH_Tempdown<span class=o>,</span><span class=n>1</span><span class=o>);</span></div>
<div class="ln" style="left:6px;top:579px">233</div><div class="code" style="left:40px;top:578px">    <span class=k>break</span><span class=o>;</span></div>
<div class="ln" style="left:6px;top:596px">234</div><div class="code" style="left:40px;top:595px">    <span class=k>case</span> pageHEIZUNG_ZEIT<span class=o>:</span>                   <span class=c>// Touchs von Rolladen Küche löschen</span></div>
</div>
<div class="a track" style="left:1662px;top:95px;width:16px;height:608px;"></div>
<div class="a raised" style="left:1662px;top:95px;width:16px;height:16px;"><svg width="16" height="16" viewBox="0 0 16 16" style="position:absolute;left:0;top:0"><polygon points="4,9 8,5 12,9" fill="#000"/></svg></div>
<div class="a raised" style="left:1662px;top:687px;width:16px;height:16px;"><svg width="16" height="16" viewBox="0 0 16 16" style="position:absolute;left:0;top:0"><polygon points="4,6 12,6 8,10" fill="#000"/></svg></div>
<div class="a raised" style="left:1662px;top:154px;width:16px;height:8px;"></div>
<div class="a track" style="left:394px;top:703px;width:1268px;height:16px;"></div>
<div class="a raised" style="left:394px;top:703px;width:16px;height:16px;"><svg width="16" height="16" viewBox="0 0 16 16" style="position:absolute;left:0;top:0"><polygon points="9,4 9,12 5,8" fill="#000"/></svg></div>
<div class="a raised" style="left:1646px;top:703px;width:16px;height:16px;"><svg width="16" height="16" viewBox="0 0 16 16" style="position:absolute;left:0;top:0"><polygon points="6,4 6,12 10,8" fill="#000"/></svg></div>
<div class="a raised" style="left:410px;top:703px;width:236px;height:16px;"></div>
<div class="a" style="left:1662px;top:703px;width:16px;height:16px;background:#d4d0c8"></div>
<div class="a" style="left:392px;top:719px;width:1288px;height:7px;background:linear-gradient(#fff 0,#fff 35%,#d4d0c8 100%)"></div>
<div class="a" style="left:0px;top:721px;width:392px;height:3px;background:linear-gradient(#fff,#e8e6e0)"></div>
<div class="a" style="left:822px;top:722px;width:34px;height:2px;background:repeating-linear-gradient(to right,#000 0 2px,transparent 2px 4px)"></div>
<div class="a" style="left:3px;top:730px;width:59px;height:21px;background:#d4d0c8;border-top:1px solid #fff;border-left:1px solid #fff;border-right:2px solid #404040;border-radius:2px 2px 0 0;"></div>
<div class="a" style="left:124px;top:730px;width:37px;height:21px;background:#d4d0c8;border-top:1px solid #fff;border-left:1px solid #fff;border-right:2px solid #404040;border-radius:2px 2px 0 0;"></div>
<div class="a" style="left:62px;top:727px;width:62px;height:26px;background:#d4d0c8;border-top:1px solid #fff;border-left:1px solid #fff;border-right:2px solid #404040;border-radius:2px 2px 0 0;"></div>
<div class="t" style="left:6px;top:734px;letter-spacing:-0.267px;">Meldungen</div>
<div class="t" style="left:67px;top:734px;letter-spacing:-0.25px;">Ausgaben</div>
<div class="t" style="left:127px;top:734px;letter-spacing:-0.601px;">Suche</div>
<div class="a" style="left:0px;top:751px;width:478px;height:1px;background:#fff"></div>
<div class="a sunken" style="left:2px;top:752px;width:472px;height:246px;background:#fff"></div>
<div class="out" style="left:4px;top:769px;">Conrad C-Control Pro 2014</div>
<div class="out" style="left:4px;top:783px;">OK0</div>
<div class="out" style="left:4px;top:797px;">ÿ!</div>
<div class="out" style="left:4px;top:811px;">Interpreter gestartet - 4kb RAM</div>
<div class="out" style="left:4px;top:853px;">Conrad C-Control Pro 2014</div>
<div class="out" style="left:4px;top:867px;">OK0</div>
<div class="out" style="left:4px;top:909px;">Conrad C-Control Pro 2014</div>
<div class="out" style="left:4px;top:923px;">OK0</div>
<div class="out" style="left:4px;top:937px;">ÿ!</div>
<div class="out" style="left:4px;top:951px;">Interpreter gestartet - 4kb RAM</div>
<div class="a track" style="left:457px;top:754px;width:16px;height:224px;"></div>
<div class="a raised" style="left:457px;top:754px;width:16px;height:16px;"><svg width="16" height="16" viewBox="0 0 16 16" style="position:absolute;left:0;top:0"><polygon points="4,9 8,5 12,9" fill="#000"/></svg></div>
<div class="a raised" style="left:457px;top:961px;width:16px;height:16px;"><svg width="16" height="16" viewBox="0 0 16 16" style="position:absolute;left:0;top:0"><polygon points="4,6 12,6 8,10" fill="#000"/></svg></div>
<div class="a raised" style="left:457px;top:954px;width:16px;height:7px;"></div>
<div class="a track" style="left:4px;top:978px;width:453px;height:16px;"></div>
<div class="a raised" style="left:4px;top:978px;width:16px;height:16px;"><svg width="16" height="16" viewBox="0 0 16 16" style="position:absolute;left:0;top:0"><polygon points="9,4 9,12 5,8" fill="#000"/></svg></div>
<div class="a raised" style="left:441px;top:978px;width:16px;height:16px;"><svg width="16" height="16" viewBox="0 0 16 16" style="position:absolute;left:0;top:0"><polygon points="6,4 6,12 10,8" fill="#000"/></svg></div>
<div class="a raised" style="left:20px;top:978px;width:225px;height:16px;"></div>
<div class="a" style="left:457px;top:978px;width:16px;height:16px;background:#d4d0c8"></div>
<div class="a" style="left:474px;top:752px;width:4px;height:246px;background:linear-gradient(to right,#fff,#d4d0c8)"></div>
<div class="a" style="left:475px;top:857px;width:2px;height:34px;background:repeating-linear-gradient(to bottom,#000 0 2px,transparent 2px 4px)"></div>
<div class="a" style="left:478px;top:751px;width:1202px;height:1px;background:#fff"></div>
<div class="a" style="left:478px;top:752px;width:1202px;height:246px;background:#fff;border-top:1px solid #808080;border-left:1px solid #808080;box-shadow:inset -1px -1px #404040,inset -3px -3px #808080"></div>
<div class="a" style="left:479px;top:753px;width:320px;height:18px;background:#e6e5df;border-right:1px solid #a8a8a0;border-bottom:1px solid #a8a8a0;border-top:1px solid #fff"></div>
<div class="a" style="left:799px;top:753px;width:138px;height:18px;background:#e6e5df;border-right:1px solid #a8a8a0;border-bottom:1px solid #a8a8a0;border-top:1px solid #fff;border-left:1px solid #fff"></div>
<div class="t" style="left:482px;top:757px;letter-spacing:-0.234px;">Variablen</div>
<div class="t" style="left:803px;top:757px;letter-spacing:0.356px;">Wert</div>
<div class="a" style="left:0px;top:998px;width:1680px;height:25px;background:#d4d0c8"></div>
<div class="a sunk1" style="left:0px;top:1000px;width:67px;height:21px;"></div>
<div class="a sunk1" style="left:69px;top:1000px;width:32px;height:21px;"></div>
<div class="a sunk1" style="left:103px;top:1000px;width:1238px;height:21px;"></div>
<div class="a sunk1" style="left:1343px;top:1000px;width:201px;height:21px;"></div>
<div class="a sunk1" style="left:1546px;top:1000px;width:38px;height:21px;"></div>
<div class="t" style="left:18px;top:1005px;letter-spacing:-0.083px;">214:1</div>
<div class="t" style="left:76px;top:1005px;letter-spacing:-0.29px;">Einf</div>
<div class="t" style="left:105px;top:1005px;letter-spacing:-0.165px;">Macht Änderungen im Dokument rückgängig.</div>
<div class="a" style="left:1555px;top:1007px;width:18px;height:9px;background:linear-gradient(#30e030,#00c000 40%,#00a800);border:1px solid #008000"></div>
<div class="t" style="left:1588px;top:1005px;color:#808080;letter-spacing:-1.39px;">CAPS</div>
<div class="t" style="left:1621px;top:1005px;letter-spacing:-1.131px;">NUM</div>
<div class="t" style="left:1651px;top:1005px;color:#808080;letter-spacing:-1.315px;">SCRL</div>
<div class="a" style="left:0px;top:1023px;width:1680px;height:27px;background:#d4d0c8;border-top:1px solid #fff"></div>
<div class="a raised" style="left:2px;top:1026px;width:52px;height:22px;"></div>
<div class="t" style="left:22px;top:1031px;font-weight:bold;font-size:11.5px;letter-spacing:0.649px;">Start</div>
<div class="a" style="left:60px;top:1028px;width:3px;height:19px;box-shadow:inset 1px 1px #fff,inset -1px -1px #808080"></div>
<div class="a" style="left:724px;top:1028px;width:3px;height:19px;box-shadow:inset 1px 1px #fff,inset -1px -1px #808080"></div>
<svg class="ic" style="left:71px;top:1029px;width:16px;height:16px" viewBox="0 0 16 16"><rect x="0" y="0" width="16" height="16" fill="#4c944c"/><rect x="0" y="0" width="16" height="3" fill="#68b068"/><path d="M8 2v12M2 8h12M3.500 3.500l9 9M12.500 3.500l-9 9" stroke="#e8f8e8" stroke-width="1"/><circle cx="8" cy="8" r="2.300" fill="#183818"/></svg>
<svg class="ic" style="left:94px;top:1029px;width:16px;height:16px" viewBox="0 0 16 16"><path d="M5 1h6l1 8l-2 1.500l1 3.500c-2 2-5 2-7 0l1-3.500l-1-2z" fill="#90b8f8" stroke="#5078d0" stroke-width=".6"/><path d="M6 2h4l.5 6h-5z" fill="#c8e0ff"/><ellipse cx="7.500" cy="13.500" rx="3.500" ry="2" fill="#d0d0f0"/></svg>
<svg class="ic" style="left:117px;top:1029px;width:16px;height:16px" viewBox="0 0 16 16"><circle cx="7.500" cy="7.500" r="7" fill="url(#gs)"/><path d="M8.500 8.500H14.400A7 7 0 0 1 8.500 14.400Z" fill="#0a0a14"/><path d="M8 15V8H15" fill="none" stroke="#eaffff" stroke-width="1"/></svg>
<svg class="ic" style="left:140px;top:1029px;width:16px;height:16px" viewBox="0 0 16 16"><rect x="0" y="0" width="16" height="16" fill="#3868c8"/><path d="M0 9l16-9v6l-16 8z" fill="#7098e0"/><path d="M2 8l12-6.500" stroke="#a07048" stroke-width="1.500"/><text x="5.500" y="15" font-family="Liberation Sans,sans-serif" font-size="8" font-weight="bold" fill="#fff">3D</text></svg>
<svg class="ic" style="left:163px;top:1029px;width:16px;height:16px" viewBox="0 0 16 16"><path d="M1 3l12-2l2 10l-12 3z" fill="#58a8f0" stroke="#1860c0" stroke-width="1"/><path d="M5 4.500h6v2.500h-3v2h3v2.500h-6z" fill="#fff" stroke="#1860c0" stroke-width=".6"/><path d="M13 4l3 2.500l-3 2.500z" fill="#e05030"/></svg>
<svg class="ic" style="left:186px;top:1029px;width:16px;height:16px" viewBox="0 0 16 16"><circle cx="9" cy="9" r="6.800" fill="#f8e020" stroke="#201800" stroke-width="1.200"/><circle cx="6.800" cy="7" r="1" fill="#000"/><circle cx="11.200" cy="7" r="1" fill="#000"/><path d="M5.500 10.500c2 3 5 3 7 0" fill="none" stroke="#000" stroke-width="1"/><rect x="0" y="0" width="4.500" height="8" fill="#103030"/><circle cx="2.200" cy="2" r="1" fill="#40e0a0"/><circle cx="2.200" cy="5.500" r="1" fill="#c0c0c0"/></svg>
<svg class="ic" style="left:209px;top:1029px;width:16px;height:16px" viewBox="0 0 16 16"><path d="M8 1.500c3 0 4.500 2 4.500 4.500c0 2-1.500 3-2 5h-5c-.5-2-2-3-2-5c0-2.500 1.500-4.500 4.500-4.500z" fill="#fffcd0" stroke="#d8c860" stroke-width=".8"/><rect x="6" y="11.500" width="4" height="3" fill="#484848"/><circle cx="6.500" cy="5.500" r=".7" fill="#000"/><circle cx="9.500" cy="5.500" r=".7" fill="#000"/><path d="M6.300 7.500c1 1.200 2.400 1.200 3.400 0" stroke="#000" stroke-width=".7" fill="none"/><path d="M1 2l2 1.500M15 2l-2 1.500M.5 7h2M13.500 7h2" stroke="#f0e060" stroke-width=".8"/></svg>
<svg class="ic" style="left:232px;top:1029px;width:16px;height:16px" viewBox="0 0 16 16"><circle cx="8" cy="8" r="7.500" fill="#e84030"/><path d="M8 8L1.500 4.200A7.500 7.500 0 0 0 8 15.500z" fill="#38a850"/><path d="M8 8l0 7.500A7.500 7.500 0 0 0 14.500 4.200z" fill="#f8c820"/><path d="M8 8L1.500 4.200A7.500 7.500 0 0 1 14.500 4.200z" fill="#e84030"/><circle cx="8" cy="8" r="3.400" fill="#fff"/><circle cx="8" cy="8" r="2.600" fill="#4888f0"/></svg>
<svg class="ic" style="left:255px;top:1029px;width:16px;height:16px" viewBox="0 0 16 16"><circle cx="8" cy="8" r="7.500" fill="#2858c8"/><ellipse cx="6" cy="5" rx="4" ry="2.500" fill="#88b0f8" opacity=".8"/><path d="M1 9c4-3 10-3 14-.5c-4-1.500-10-1.500-14 2.500z" fill="#fff"/><path d="M2 12c4-2 8-2 12-.5" stroke="#d0e0ff" stroke-width="1" fill="none"/></svg>
<svg class="ic" style="left:278px;top:1029px;width:16px;height:16px" viewBox="0 0 16 16"><circle cx="7" cy="7" r="6.500" fill="#2c88a8"/><path d="M3 3c2-1 4 0 3 2s2 2 1 4s-3 0-4-2z" fill="#48c078"/><circle cx="8" cy="7.500" r="4" fill="#c0e4f8" stroke="#306888" stroke-width="1.200"/><path d="M11 10.500l4.500 5" stroke="#a06028" stroke-width="2"/></svg>
<svg class="ic" style="left:301px;top:1029px;width:16px;height:16px" viewBox="0 0 16 16"><path d="M1.500 1.500h10l3 3v10h-13z" fill="#fff" stroke="#303030" stroke-width="1"/><rect x="3" y="4" width="10" height="2.500" fill="#2848c0"/><path d="M7.500 8l-3 2.500l3 2.500z" fill="#d02020"/><path d="M9 8l3 2.500l-3 2.500z" fill="#2040c0"/><rect x="3" y="4" width="10" height="10" fill="none" stroke="#202020" stroke-width=".8"/></svg>
<svg class="ic" style="left:324px;top:1029px;width:16px;height:16px" viewBox="0 0 16 16"><rect x=".8" y=".8" width="14.400" height="14.400" fill="#e4f0dc" stroke="#4c8c4c" stroke-width="1.600"/><path d="M3.500 4.500l8.500 7.500M12 4.500l-8.500 7.500" stroke="#2c8c3c" stroke-width="2.200"/><path d="M3.500 4.500l8.500 7.500" stroke="#8cc88c" stroke-width=".6"/></svg>
<svg class="ic" style="left:347px;top:1029px;width:16px;height:16px" viewBox="0 0 16 16"><rect x=".8" y=".8" width="14.400" height="14.400" fill="#fce4b0" stroke="#e8a840" stroke-width="1.600"/><circle cx="8" cy="8" r="4.800" fill="#fff4d8" stroke="#e08818" stroke-width="1.400"/><path d="M8 5v3.300h2.500" fill="none" stroke="#c07010" stroke-width="1.100"/></svg>
<svg class="ic" style="left:370px;top:1029px;width:16px;height:16px" viewBox="0 0 16 16"><rect x=".8" y=".8" width="14.400" height="14.400" fill="#dce8fc" stroke="#4870c8" stroke-width="1.600"/><path d="M2.500 4.500h2.500l1.500 5l2-5h1.500l1.500 5l1.500-5h2l-3 8h-1.800l-1.600-4.500l-1.800 4.500h-1.800z" fill="#2c50b8" stroke="#1c3890" stroke-width=".4"/></svg>
<svg class="ic" style="left:393px;top:1029px;width:16px;height:16px" viewBox="0 0 16 16"><circle cx="8" cy="8" r="7" fill="#3a6cd8"/><path d="M8 1a7 7 0 1 0 7 7c0-2-.8-3.500-1.500-4.500c.3 2-1 3-2 2.500c-1.500-.8-1-3-3.500-3.500c.5 1.500-1 2-2.500 3c-1.500 1-1 3 .5 3.500c1.500.5 3-.5 3-.5s-.5 2-3 2.500s-4-1.500-4-4s2-5.500 6-6z" fill="#f07818"/><path d="M2.500 4c1-1.800 3-3 5.500-3c-2 1-3 2-3.500 3.500z" fill="#f8b030"/></svg>
<svg class="ic" style="left:416px;top:1029px;width:16px;height:16px" viewBox="0 0 16 16"><rect x="0" y="0" width="16" height="16" fill="#e01828"/><rect x="0" y="11" width="16" height="5" fill="#1838c0"/><path d="M1 12l3.500-7l3.500 6l3.500-6l3.500 7h-3l-1-2.500l-2.500 4l-3-4.500l-1.500 3z" fill="#fff"/><rect x="0" y="0" width="16" height="2.500" fill="#f06068"/></svg>
<svg class="ic" style="left:439px;top:1029px;width:16px;height:16px" viewBox="0 0 16 16"><path d="M2 1l2 1.500l-1 2l3 3.500l-1.500 2l-3-3.500z" fill="#282838"/><circle cx="4.500" cy="6.500" r="1.800" fill="#d04848"/><rect x="7" y="6.500" width="8" height="8" fill="#98b0c8" stroke="#303848" stroke-width=".9"/><rect x="9" y="8.500" width="4" height="4" fill="#d8e8f8"/><path d="M3 9l2 4l3 1" stroke="#303038" stroke-width="1.200" fill="none"/></svg>
<svg class="ic" style="left:462px;top:1029px;width:16px;height:16px" viewBox="0 0 16 16"><rect x="0" y="0" width="16" height="16" fill="#fff"/><path d="M1 1l7 6.500l-7 6.500z" fill="#9048c8"/><path d="M1 1l7 6.500l-3.500 0z" fill="#e83838"/><rect x="10.500" y="1" width="4.500" height="10" fill="#f8c020"/><rect x="6" y="12" width="9" height="3.500" fill="#30b040"/><path d="M1 14l4-3.500v5z" fill="#3060d8"/></svg>
<svg class="ic" style="left:485px;top:1029px;width:16px;height:16px" viewBox="0 0 16 16"><rect x="0" y="0" width="16" height="16" fill="#1018a8"/><path d="M8 0v16M0 8h16M1.500 1.500l13 13M14.500 1.500l-13 13" stroke="#fff" stroke-width="1.600" stroke-dasharray="1.500 1.500"/><circle cx="8" cy="8" r="4.300" fill="#f8e818"/></svg>
<svg class="ic" style="left:508px;top:1029px;width:16px;height:16px" viewBox="0 0 16 16"><path d="M8 1.500a6.500 6.500 0 0 1 6.500 6.500" fill="none" stroke="#f09030" stroke-width="3"/><path d="M14.500 8a6.500 6.500 0 0 1-6.500 6.500" fill="none" stroke="#58b048" stroke-width="3"/><path d="M8 14.500a6.500 6.500 0 0 1-6.500-6.500" fill="none" stroke="#e8c020" stroke-width="3"/><path d="M1.500 8a6.500 6.500 0 0 1 6.500-6.500" fill="none" stroke="#4890e0" stroke-width="3"/><circle cx="8" cy="8" r="3" fill="#e8f0f8"/></svg>
<svg class="ic" style="left:531px;top:1029px;width:16px;height:16px" viewBox="0 0 16 16"><path d="M8 .8c2.500 1.500 5 1.500 7 1.500c0 6-2 10.500-7 13c-5-2.500-7-7-7-13c2 0 4.500 0 7-1.500z" fill="#d88820" stroke="#905010" stroke-width=".7"/><circle cx="6" cy="5" r="1.500" fill="#f8c850"/><circle cx="10" cy="8" r="1.700" fill="#f0b040"/><circle cx="6.500" cy="10" r="1.300" fill="#b86010"/><circle cx="10.500" cy="4" r="1" fill="#a04808"/></svg>
<svg class="ic" style="left:554px;top:1029px;width:16px;height:16px" viewBox="0 0 16 16"><rect x="0" y="0" width="16" height="16" fill="#f8d818"/><circle cx="8" cy="8" r="6" fill="none" stroke="#fff" stroke-width="1.500"/><text x="2.500" y="11.500" font-family="Liberation Serif,serif" font-size="9" font-weight="bold" fill="#fff">QV</text></svg>
<svg class="ic" style="left:577px;top:1029px;width:16px;height:16px" viewBox="0 0 16 16"><path d="M6 4h7l2.500 2.500v9h-9.500z" fill="#dce8f8" stroke="#5878b0" stroke-width=".8"/><rect x=".5" y=".5" width="10" height="9" fill="#e8f4e8" stroke="#287028" stroke-width="1"/><path d="M2.500 2l6 6M8.500 2l-6 6" stroke="#208028" stroke-width="2"/><path d="M8 11h6M8 13h6" stroke="#88a0c8" stroke-width=".8"/></svg>
<svg class="ic" style="left:600px;top:1029px;width:16px;height:16px" viewBox="0 0 16 16"><path d="M1.500 13.500v-10h4.500l1.500 2h7v8z" fill="#f0d060" stroke="#a08020" stroke-width=".8"/><path d="M1.500 13.500v-6.500h13v6.500z" fill="#fae890" stroke="#a08020" stroke-width=".8"/></svg>
<svg class="ic" style="left:623px;top:1029px;width:16px;height:16px" viewBox="0 0 16 16"><path d="M6 4h7l2.500 2.500v9h-9.500z" fill="#dce8f8" stroke="#5878b0" stroke-width=".8"/><rect x=".5" y=".5" width="10" height="9" fill="#e8f4e8" stroke="#287028" stroke-width="1"/><path d="M2.500 2l6 6M8.500 2l-6 6" stroke="#208028" stroke-width="2"/><path d="M8 11h6M8 13h6" stroke="#88a0c8" stroke-width=".8"/></svg>
<svg class="ic" style="left:646px;top:1029px;width:16px;height:16px" viewBox="0 0 16 16"><path d="M8 .8l1.300 0l4.200 12.200h-11z" fill="#f88a10"/><path d="M5.600 6h4.800l.8 2.300h-6.400zM4.300 10h7.400l.6 1.800h-8.600z" fill="#fff"/><path d="M1.500 12.500h13l.8 2.800h-14.600z" fill="#f07800" stroke="#c05800" stroke-width=".5"/></svg>
<svg class="ic" style="left:669px;top:1029px;width:16px;height:16px" viewBox="0 0 16 16"><path d="M8 .8a7.200 7.200 0 0 1 7.200 7.200h-3a4.200 4.200 0 0 0-4.200-4.200z" fill="#e87818"/><path d="M15.200 8a7.200 7.200 0 0 1-7.200 7.200v-3a4.200 4.200 0 0 0 4.200-4.200z" fill="#48b030"/><path d="M8 15.200a7.200 7.200 0 0 1-7.200-7.200h3a4.200 4.200 0 0 0 4.200 4.200z" fill="#f0c018"/><path d="M.8 8a7.200 7.200 0 0 1 7.200-7.200v3a4.200 4.200 0 0 0-4.200 4.200z" fill="#2868d8"/><circle cx="8" cy="8" r="4.400" fill="#fff"/><path d="M6.300 5.200l4.800 2.800l-4.800 2.800z" fill="#181830"/></svg>
<svg class="ic" style="left:692px;top:1029px;width:16px;height:16px" viewBox="0 0 16 16"><text x="-.5" y="12.500" font-family="Liberation Sans,sans-serif" font-size="12" font-weight="bold" fill="#1828a0" textLength="11">W</text><text x="8" y="14.500" font-family="Liberation Sans,sans-serif" font-size="12" font-weight="bold" fill="#d81828">B</text></svg>
<svg class="ic" style="left:4px;top:1029px;width:16px;height:16px" viewBox="0 0 16 16"><path d="M1.500 3.500c2-1.500 3.500-1 5.500.3l-1.300 4.500c-2-1.200-3.500-1.500-5.500-.2z" fill="#e84820"/><path d="M8 4.200c2 1 3.500 1 5.500-.2l-1.300 4.500c-2 1.200-3.500 1.200-5.500.2z" fill="#48b038"/><path d="M.2 9.200c2-1.300 3.500-1 5.300.2l-1.300 4.500c-1.800-1.200-3.300-1.500-5.300-.2z" fill="#3878e0" transform="translate(0.300,0)"/><path d="M6.500 10.300c2 1 3.500 1 5.500-.2l-1.300 4.500c-2 1.200-3.500 1.200-5.500.2z" fill="#f0c020"/></svg>
<div class="a raised" style="left:731px;top:1026px;width:160px;height:22px;"></div>
<div class="a raised" style="left:894px;top:1026px;width:160px;height:22px;"></div>
<div class="a" style="left:1057px;top:1026px;width:160px;height:22px;background:repeating-conic-gradient(#fff 0% 25%,#d4d0c8 0% 50%) 0 0/2px 2px;box-shadow:inset -1px -1px #fff,inset 1px 1px #404040,inset -2px -2px #d4d0c8,inset 2px 2px #808080"></div>
<svg class="ic" style="left:736px;top:1029px;width:16px;height:16px" viewBox="0 0 16 16"><circle cx="8" cy="8" r="7" fill="#3a6cd8"/><path d="M8 1a7 7 0 1 0 7 7c0-2-.8-3.500-1.500-4.500c.3 2-1 3-2 2.500c-1.500-.8-1-3-3.500-3.500c.5 1.500-1 2-2.500 3c-1.500 1-1 3 .5 3.500c1.500.5 3-.5 3-.5s-.5 2-3 2.500s-4-1.500-4-4s2-5.500 6-6z" fill="#f07818"/><path d="M2.500 4c1-1.800 3-3 5.500-3c-2 1-3 2-3.500 3.500z" fill="#f8b030"/></svg>
<svg class="ic" style="left:899px;top:1029px;width:16px;height:16px" viewBox="0 0 16 16"><path d="M1.500 13.500v-10h4.500l1.500 2h7v8z" fill="#f0d060" stroke="#a08020" stroke-width=".8"/><path d="M1.500 13.500v-6.500h13v6.500z" fill="#fae890" stroke="#a08020" stroke-width=".8"/></svg>
<svg class="ic" style="left:1063px;top:1029px;width:16px;height:16px" viewBox="0 0 16 16"><circle cx="7.500" cy="7.500" r="7" fill="url(#gs)"/><path d="M8.500 8.500H14.400A7 7 0 0 1 8.500 14.400Z" fill="#0a0a14"/><path d="M8 15V8H15" fill="none" stroke="#eaffff" stroke-width="1"/></svg>
<div class="t" style="left:754px;top:1031px;">C-Control Pro - Forum - ...</div>
<div class="t" style="left:917px;top:1031px;letter-spacing:-0.049px;">Aktuelle Haussteuerung ...</div>
<div class="t" style="left:1081px;top:1032px;font-weight:bold;letter-spacing:0.237px;">C-Control Pro IDE</div>
<div class="a sunk1" style="left:1565px;top:1026px;width:113px;height:22px;"></div>
<div class="t" style="left:1570px;top:1030px;font-weight:bold;font-size:12px">«</div>
<div class="t" style="left:1641px;top:1031px;letter-spacing:0.167px;">22:54</div>
<svg class="ic" style="left:1583px;top:1029px;width:16px;height:16px" viewBox="0 0 16 16"><rect x="6" y="1" width="9" height="7.500" fill="#4858a8" stroke="#283068" stroke-width=".8"/><rect x="7.500" y="2.500" width="6" height="4.500" fill="#8898d8"/><rect x="1" y="5" width="9" height="7.500" fill="#5868b8" stroke="#283068" stroke-width=".8"/><rect x="2.500" y="6.500" width="6" height="4.500" fill="#b8c4f0"/><path d="M3 14.500h6M9 10.500h5" stroke="#8890b8" stroke-width="1.500"/></svg>
<svg class="ic" style="left:1601px;top:1029px;width:16px;height:16px" viewBox="0 0 16 16"><rect x="0" y="0" width="16" height="16" rx="2" fill="#d01830"/><path d="M3 2h10v7c0 3-2.500 5-5 6c-2.500-1-5-3-5-6z" fill="#f8f8ff" stroke="#1848c0" stroke-width="1.400"/><path d="M5 4.500l3 6.500l3-6.500" fill="none" stroke="#e02030" stroke-width="1.800"/></svg>
<svg class="ic" style="left:1620px;top:1029px;width:16px;height:16px" viewBox="0 0 16 16"><circle cx="5.500" cy="4" r="3" fill="#f0c018"/><path d="M0 15c0-5 2-7.500 5.500-7.500s5.500 2.500 5.500 7.500z" fill="#e8b010"/><circle cx="10.500" cy="5.500" r="2.600" fill="#f8d030"/><path d="M6 15.500c0-4 1.500-6.500 4.500-6.500s4.500 2.500 4.500 6.500z" fill="#f0c020"/><rect x="9" y="10" width="6" height="5.500" fill="#f8e060" stroke="#806000" stroke-width=".6"/><rect x="11" y="11.500" width="2" height="3" fill="#201800"/></svg>
<div class="a" style="left:190px;top:70px;width:103px;height:19px;background:#ffffe1;border:1px solid #555;box-shadow:2px 2px 2px rgba(0,0,0,.5)"></div>
<div class="t" style="left:193px;top:75px;letter-spacing:-0.091px;">Rückgängig (Ctrl+Z)</div>
</body></html>
